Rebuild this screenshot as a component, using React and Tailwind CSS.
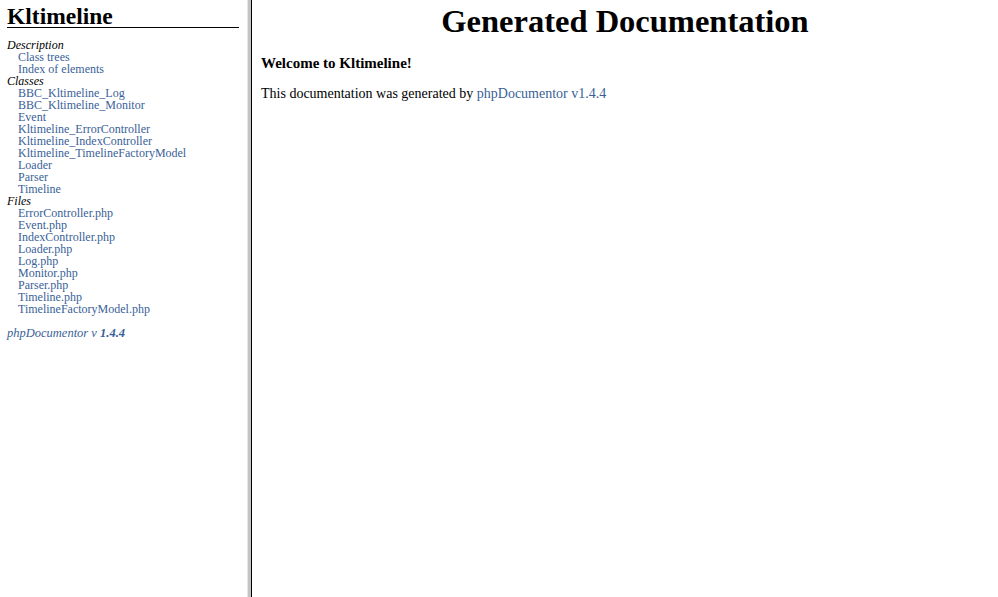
export default function App() {
  const serif = { fontFamily: '"Liberation Serif", "DejaVu Serif", serif' };
  const classes = [
    "BBC_Kltimeline_Log",
    "BBC_Kltimeline_Monitor",
    "Event",
    "Kltimeline_ErrorController",
    "Kltimeline_IndexController",
    "Kltimeline_TimelineFactoryModel",
    "Loader",
    "Parser",
    "Timeline",
  ];
  const files = [
    "ErrorController.php",
    "Event.php",
    "IndexController.php",
    "Loader.php",
    "Log.php",
    "Monitor.php",
    "Parser.php",
    "Timeline.php",
    "TimelineFactoryModel.php",
  ];
  const Item = ({ children }) => (
    <div className="pl-[11px] text-[#3a5f98] leading-[12px] h-[12px]">{children}</div>
  );
  const Head = ({ children }) => (
    <div className="italic text-black leading-[12px] h-[12px]">{children}</div>
  );
  return (
    <div className="flex w-[998px] h-[597px] bg-white overflow-hidden" style={serif}>
      <div className="w-[247px] shrink-0 pl-[7px] pr-[8px] text-[12px]">
        <div className="text-[23.5px] font-bold leading-[24px] pt-[4px] border-b border-black h-[28px]">
          Kltimeline
        </div>
        <div className="pt-[11px]">
          <Head>Description</Head>
          <Item>Class trees</Item>
          <Item>Index of elements</Item>
          <Head>Classes</Head>
          {classes.map((c) => (
            <Item key={c}>{c}</Item>
          ))}
          <Head>Files</Head>
          {files.map((c) => (
            <Item key={c}>{c}</Item>
          ))}
        </div>
        <div className="mt-[12px] italic text-[#3a5f98] leading-[12px] text-[12.5px]">
          phpDocumentor v <b>1.4.4</b>
        </div>
      </div>
      <div className="flex shrink-0 h-full">
        <div className="w-[1px] bg-[#e6e6e6]" />
        <div className="w-[3px] bg-[#c4c4c4]" />
        <div className="w-[1px] bg-[#000]" />
      </div>
      <div className="flex-1 px-[9px]">
        <h1 className="text-center text-[32.5px] font-bold leading-[34px] pt-[4px]">
          Generated Documentation
        </h1>
        <div className="mt-[16px] text-[15px] font-bold leading-[18px]">Welcome to Kltimeline!</div>
        <div className="mt-[13px] text-[14px] leading-[18px]">
          This documentation was generated by{" "}
          <span className="text-[#3a5f98]">phpDocumentor v1.4.4</span>
        </div>
      </div>
    </div>
  );
}
